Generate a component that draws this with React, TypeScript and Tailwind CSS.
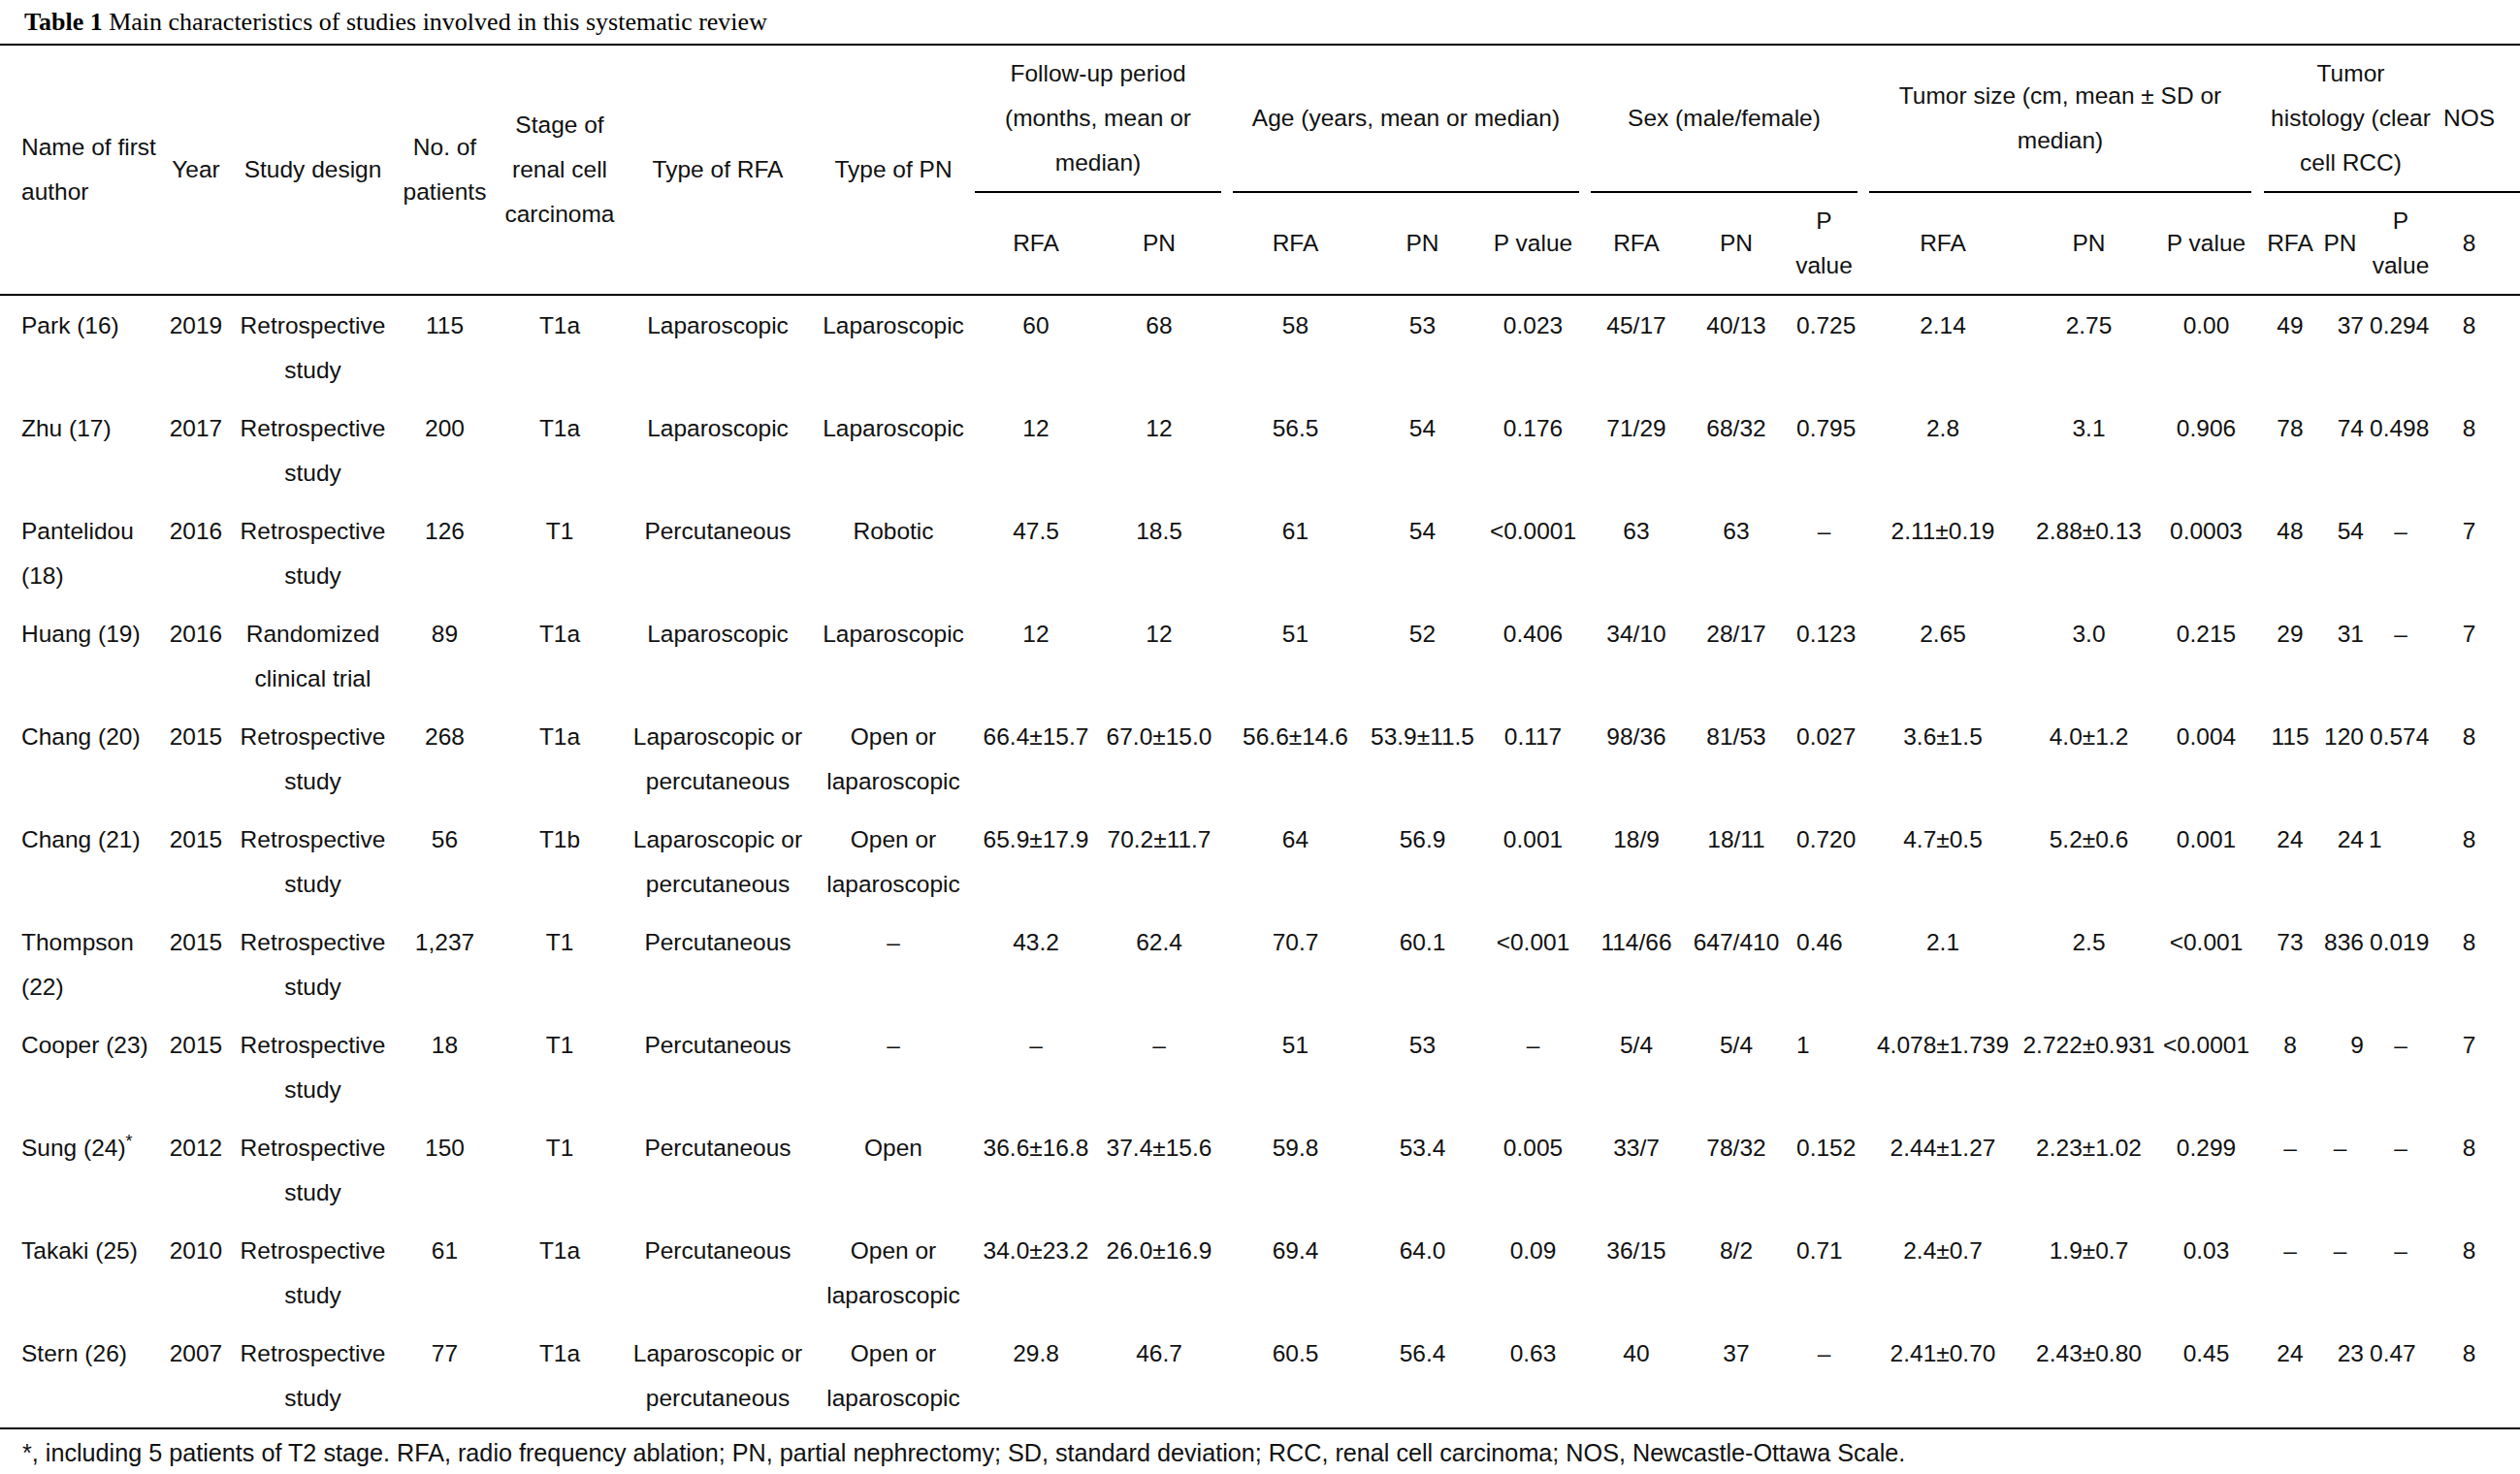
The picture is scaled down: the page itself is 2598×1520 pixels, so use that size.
import React from "react";

const GRID =
  "grid grid-cols-[165px_74px_167px_105px_132px_194px_168px_126px_128px_12px_129px_133px_95px_12px_94px_112px_69px_12px_152px_149px_93px_13px_54px_49px_76px_85px]";

type Cell = string | string[];

type Row = {
  name: Cell;
  star?: boolean;
  c: Cell[];
};

const RS = ["Retrospective", "study"];
const LP = ["Laparoscopic or", "percutaneous"];
const OL = ["Open or", "laparoscopic"];

const rows: Row[] = [
  { name: "Park (16)", c: ["2019", RS, "115", "T1a", "Laparoscopic", "Laparoscopic", "60", "68", "58", "53", "0.023", "45/17", "40/13", "0.725", "2.14", "2.75", "0.00", "49", "37", "0.294", "8"] },
  { name: "Zhu (17)", c: ["2017", RS, "200", "T1a", "Laparoscopic", "Laparoscopic", "12", "12", "56.5", "54", "0.176", "71/29", "68/32", "0.795", "2.8", "3.1", "0.906", "78", "74", "0.498", "8"] },
  { name: ["Pantelidou", "(18)"], c: ["2016", RS, "126", "T1", "Percutaneous", "Robotic", "47.5", "18.5", "61", "54", "<0.0001", "63", "63", "–", "2.11±0.19", "2.88±0.13", "0.0003", "48", "54", "–", "7"] },
  { name: "Huang (19)", c: ["2016", ["Randomized", "clinical trial"], "89", "T1a", "Laparoscopic", "Laparoscopic", "12", "12", "51", "52", "0.406", "34/10", "28/17", "0.123", "2.65", "3.0", "0.215", "29", "31", "–", "7"] },
  { name: "Chang (20)", c: ["2015", RS, "268", "T1a", LP, OL, "66.4±15.7", "67.0±15.0", "56.6±14.6", "53.9±11.5", "0.117", "98/36", "81/53", "0.027", "3.6±1.5", "4.0±1.2", "0.004", "115", "120", "0.574", "8"] },
  { name: "Chang (21)", c: ["2015", RS, "56", "T1b", LP, OL, "65.9±17.9", "70.2±11.7", "64", "56.9", "0.001", "18/9", "18/11", "0.720", "4.7±0.5", "5.2±0.6", "0.001", "24", "24", "1", "8"] },
  { name: ["Thompson", "(22)"], c: ["2015", RS, "1,237", "T1", "Percutaneous", "–", "43.2", "62.4", "70.7", "60.1", "<0.001", "114/66", "647/410", "0.46", "2.1", "2.5", "<0.001", "73", "836", "0.019", "8"] },
  { name: "Cooper (23)", c: ["2015", RS, "18", "T1", "Percutaneous", "–", "–", "–", "51", "53", "–", "5/4", "5/4", "1", "4.078±1.739", "2.722±0.931", "<0.0001", "8", "9", "–", "7"] },
  { name: "Sung (24)", star: true, c: ["2012", RS, "150", "T1", "Percutaneous", "Open", "36.6±16.8", "37.4±15.6", "59.8", "53.4", "0.005", "33/7", "78/32", "0.152", "2.44±1.27", "2.23±1.02", "0.299", "–", "–", "–", "8"] },
  { name: "Takaki (25)", c: ["2010", RS, "61", "T1a", "Percutaneous", OL, "34.0±23.2", "26.0±16.9", "69.4", "64.0", "0.09", "36/15", "8/2", "0.71", "2.4±0.7", "1.9±0.7", "0.03", "–", "–", "–", "8"] },
  { name: "Stern (26)", c: ["2007", RS, "77", "T1a", LP, OL, "29.8", "46.7", "60.5", "56.4", "0.63", "40", "37", "–", "2.41±0.70", "2.43±0.80", "0.45", "24", "23", "0.47", "8"] },
];

function Lines({ v }: { v: Cell }) {
  if (Array.isArray(v)) {
    return (
      <>
        {v.map((l, i) => (
          <React.Fragment key={i}>
            {i > 0 && <br />}
            {l}
          </React.Fragment>
        ))}
      </>
    );
  }
  return <>{v}</>;
}

// index into c[] (0-based): 13 = sex P value, 18 = hist PN, 19 = hist P value, 20 = NOS
function cellClass(idx: number, v: Cell): string {
  const dash = v === "–";
  if (idx === 13 && !dash) return "text-left pl-[6px]";
  if (idx === 18 && !dash) return "text-right pr-0";
  if (idx === 19 && v === "1") return "text-left pl-[5px]";
  if (idx === 19 && !dash) return "text-left pl-[6px]";
  if (idx === 20) return "text-center pr-[20px]";
  return "text-center";
}

function Spacer() {
  return <div />;
}

function DataRow({ r }: { r: Row }) {
  const cells: React.ReactNode[] = [];
  r.c.forEach((v, i) => {
    cells.push(
      <div key={"c" + i} className={"whitespace-nowrap pt-[7.5px] " + cellClass(i, v)}>
        <Lines v={v} />
      </div>
    );
    if (i === 7 || i === 10 || i === 13 || i === 16) cells.push(<Spacer key={"s" + i} />);
  });
  return (
    <div className={GRID + " h-[106.1px]"}>
      <div className="whitespace-nowrap pt-[7.5px] pl-[22px] text-left">
        <Lines v={r.name} />
        {r.star && <span className="relative top-[-9px] text-[18px] leading-none">*</span>}
      </div>
      {cells}
    </div>
  );
}

function H({ children, className = "" }: { children: React.ReactNode; className?: string }) {
  return (
    <div className={"flex flex-col justify-center whitespace-nowrap text-center " + className}>
      <div>{children}</div>
    </div>
  );
}

export default function App() {
  return (
    <div
      className="w-[2598px] h-[1520px] overflow-hidden bg-white text-[#111] text-[24.5px] leading-[46px]"
      style={{ fontFamily: '"Liberation Sans", Arial, Helvetica, sans-serif' }}
    >
      <div
        className="h-[45px] pl-[25px] text-[26px] leading-[45px] text-black"
        style={{ fontFamily: '"Liberation Serif", "Times New Roman", serif' }}
      >
        <span className="font-bold">Table 1</span> Main characteristics of studies involved in this systematic review
      </div>
      <div className="h-[2px] bg-black" />

      <div className={GRID + " grid-rows-[152px_104px]"}>
        <H className="row-span-2 text-left pl-[22px] items-start">
          Name of first
          <br />
          author
        </H>
        <H className="row-span-2">Year</H>
        <H className="row-span-2">Study design</H>
        <H className="row-span-2">
          No. of
          <br />
          patients
        </H>
        <H className="row-span-2">
          Stage of
          <br />
          renal cell
          <br />
          carcinoma
        </H>
        <H className="row-span-2">Type of RFA</H>
        <H className="row-span-2">Type of PN</H>
        <H className="col-span-2 border-b-2 border-black">
          Follow-up period
          <br />
          (months, mean or
          <br />
          median)
        </H>
        <div className="row-span-2" />
        <H className="col-span-3 border-b-2 border-black">Age (years, mean or median)</H>
        <div className="row-span-2" />
        <H className="col-span-3 border-b-2 border-black">Sex (male/female)</H>
        <div className="row-span-2" />
        <H className="col-span-3 border-b-2 border-black">
          Tumor size (cm, mean ± SD or
          <br />
          median)
        </H>
        <div className="row-span-2" />
        <H className="col-span-3 border-b-2 border-black">
          Tumor
          <br />
          histology (clear
          <br />
          cell RCC)
        </H>
        <H className="border-b-2 border-black pr-[20px]">NOS</H>

        <H>RFA</H>
        <H>PN</H>
        <H>RFA</H>
        <H>PN</H>
        <H>P value</H>
        <H>RFA</H>
        <H>PN</H>
        <H>
          P
          <br />
          value
        </H>
        <H>RFA</H>
        <H>PN</H>
        <H>P value</H>
        <H>RFA</H>
        <H>PN</H>
        <H>
          P
          <br />
          value
        </H>
        <H className="pr-[20px]">8</H>
      </div>
      <div className="h-[2px] bg-black" />

      {rows.map((r, i) => (
        <DataRow key={i} r={r} />
      ))}

      <div className="h-[2px] bg-black" />
      <div className="pl-[23px] pt-[1px] whitespace-nowrap text-[25.2px]">
        *, including 5 patients of T2 stage. RFA, radio frequency ablation; PN, partial nephrectomy; SD, standard
        deviation; RCC, renal cell carcinoma; NOS, Newcastle-Ottawa Scale.
      </div>
    </div>
  );
}
